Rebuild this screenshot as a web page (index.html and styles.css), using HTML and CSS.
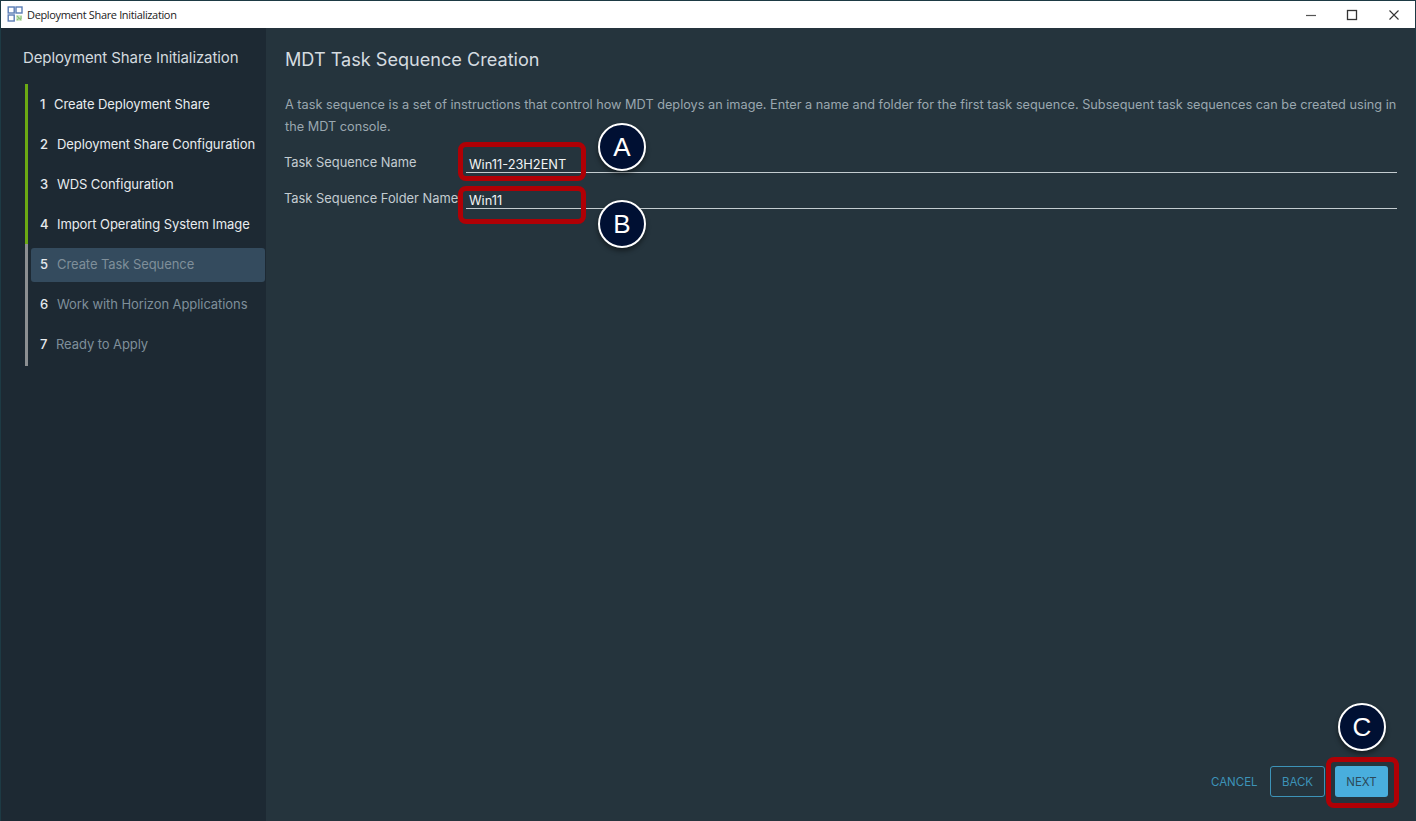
FILE: index.html
```html
<!DOCTYPE html>
<html lang="en">
<head>
<meta charset="utf-8">
<title>Deployment Share Initialization</title>
<link rel="stylesheet" href="styles.css">
</head>
<body>
<div class="window">
  <header class="titlebar">
    <svg class="app-icon" width="16" height="16" viewBox="0 0 16 16">
      <rect x="1.2" y="1" width="6" height="6" fill="#fff" stroke="#5a7db5" stroke-width="1.4"/>
      <rect x="9" y="1" width="6" height="6" fill="#fff" stroke="#5a7db5" stroke-width="1.4"/>
      <rect x="1.2" y="9" width="6" height="6" fill="#fff" stroke="#5a7db5" stroke-width="1.4"/>
      <rect x="9" y="9" width="6" height="6" fill="#d8ebcf"/>
      <path d="M10 10l4 4M14 10v3M10 14l2-2" stroke="#8cc47c" stroke-width="1.2" fill="none"/>
    </svg>
    <span class="title-text">Deployment Share Initialization</span>
    <div class="win-controls">
      <svg width="12" height="12" viewBox="0 0 12 12"><path d="M1 6.5h10" stroke="#555" stroke-width="1.2"/></svg>
      <svg width="12" height="12" viewBox="0 0 12 12"><rect x="1.5" y="1.5" width="9" height="9" fill="none" stroke="#333" stroke-width="1.3"/></svg>
      <svg class="win-close" width="12" height="12" viewBox="0 0 12 12"><path d="M1.5 1.5l9 9M10.5 1.5l-9 9" stroke="#333" stroke-width="1.1"/></svg>
    </div>
  </header>
  <div class="content">
    <aside class="sidebar">
      <h2 class="side-title">Deployment Share Initialization</h2>
      <ol class="steps">
        <li class="step done"><span class="num">1</span><span class="lbl">Create Deployment Share</span></li>
        <li class="step done"><span class="num">2</span><span class="lbl wide">Deployment Share Configuration</span></li>
        <li class="step done"><span class="num">3</span><span class="lbl wide">WDS Configuration</span></li>
        <li class="step done"><span class="num">4</span><span class="lbl wide">Import Operating System Image</span></li>
        <li class="step current"><span class="num">5</span><span class="lbl wide">Create Task Sequence</span></li>
        <li class="step todo"><span class="num">6</span><span class="lbl wide">Work with Horizon Applications</span></li>
        <li class="step todo last"><span class="num">7</span><span class="lbl mid">Ready to Apply</span></li>
      </ol>
    </aside>
    <main class="main">
      <h1 class="heading">MDT Task Sequence Creation</h1>
      <p class="intro">A task sequence is a set of instructions that control how MDT deploys an image. Enter a name and folder for the first task sequence. Subsequent task sequences can be created using in the MDT console.</p>
      <div class="field first">
        <span class="field-label">Task Sequence Name</span>
        <span class="field-value">Win11-23H2ENT</span>
      </div>
      <div class="field">
        <span class="field-label">Task Sequence Folder Name</span>
        <span class="field-value">Win11</span>
      </div>
      <div class="actions">
        <button class="btn link">CANCEL</button>
        <button class="btn outline">BACK</button>
        <button class="btn primary">NEXT</button>
      </div>
      <div class="mark box-a"></div>
      <div class="mark box-b"></div>
      <div class="mark box-c"></div>
      <div class="callout call-a">A</div>
      <div class="callout call-b">B</div>
      <div class="callout call-c">C</div>
    </main>
  </div>
</div>
</body>
</html>
```
FILE: styles.css
```css
* { box-sizing: border-box; }
html, body { margin: 0; height: 100%; }
body { font-family: Inter, "Open Sans", sans-serif; background: #25343d; overflow: hidden; }
.window { height: 821px; display: flex; flex-direction: column; border: 1px solid #1d3a44; border-bottom: 0; }
.titlebar { height: 27px; flex: none; background: #fff; display: flex; align-items: center; padding-left: 6px; }
.app-icon { flex: none; margin-bottom: 1px; }
.title-text { margin-left: 4px; margin-bottom: 1px; font: 11px "Open Sans", sans-serif; letter-spacing: -0.35px; color: #222; }
.win-controls { margin-left: auto; display: flex; gap: 29px; padding-right: 15px; }
.win-close { margin-left: 1px; }
.content { flex: 1; display: flex; min-height: 0; }
.sidebar { width: 265px; flex: none; background: #1d2933; padding-top: 20px; }
.side-title { margin: 0 0 16px 22px; font-size: 15px; line-height: 20px; font-weight: 400; color: #d3dadf; white-space: nowrap; letter-spacing: -0.1px; }
.steps { list-style: none; margin: 0 0 0 24px; padding: 0; }
.step { height: 40px; display: flex; align-items: center; border-left: 3px solid #6ba913; position: relative; font-size: 13px; letter-spacing: -0.08px; }
.step.current, .step.todo { border-left-color: #8c8f92; }
.step.last { height: 42px; padding-bottom: 2px; }
.num { margin-left: 12px; width: 9px; color: #e6eaed; font-weight: 500; }
.lbl { margin-left: 5px; color: #e8ecef; white-space: nowrap; }
.lbl.wide { margin-left: 8px; }
.lbl.mid { margin-left: 7px; }
.current .lbl, .todo .lbl { color: #7f8f9a; }
.current { z-index: 0; }
.current::before { content: ""; position: absolute; z-index: -1; left: 3px; top: 4px; bottom: 2px; width: 234px; background: #344b5e; border-radius: 3px; }
.main { flex: 1; position: relative; padding: 20px 18px 0 19px; min-width: 0; }
.heading { margin: 0; font-size: 18.12px; line-height: 22px; font-weight: 400; color: #d5dce0; }
.intro { margin: 24px 0 0; font-size: 12.73px; line-height: 22px; color: #9aa7af; }
.field { display: flex; height: 36px; align-items: flex-end; margin-left: -1px; }
.field.first { margin-top: -1px; }
.field-label { width: 182px; flex: none; font-size: 12.87px; line-height: 20px; color: #c3ccd1; white-space: nowrap; }
.field-value { flex: 1; border-bottom: 1px solid #c4ccd0; padding: 0 0 0 3px; font-size: 12.8px; line-height: 14px; color: #f2f4f5; }
.actions { position: absolute; right: 27px; bottom: 24px; display: flex; align-items: center; gap: 13px; }
.btn { height: 31px; font: 400 11.5px Inter, sans-serif; border-radius: 3px; padding: 0; }
.link { width: 46px; background: none; border: 0; color: #3d93b8; }
.outline { width: 55px; background: none; border: 1px solid #3d93b8; color: #3d93b8; }
.primary { width: 53px; margin-left: -3px; background: #49aedd; border: 0; color: #2c4a5a; }
.mark { position: absolute; border: 5px solid #b00005; border-radius: 8px; }
.box-a { left: 192px; top: 114px; width: 128px; height: 39px; }
.box-b { left: 192px; top: 158px; width: 128px; height: 38px; }
.box-c { right: 16px; bottom: 13px; width: 73px; height: 51px; }
.callout { position: absolute; width: 48px; height: 48px; border-radius: 50%; background: #001033; border: 2px solid #fff; color: #fff; font-size: 26px; line-height: 44px; text-align: center; box-shadow: 0 3px 5px rgba(0,0,0,.45); font-family: "Liberation Sans", sans-serif; }
.call-a { left: 332px; top: 95px; }
.call-b { left: 332px; top: 172px; }
.call-c { right: 29px; bottom: 70px; }
```
